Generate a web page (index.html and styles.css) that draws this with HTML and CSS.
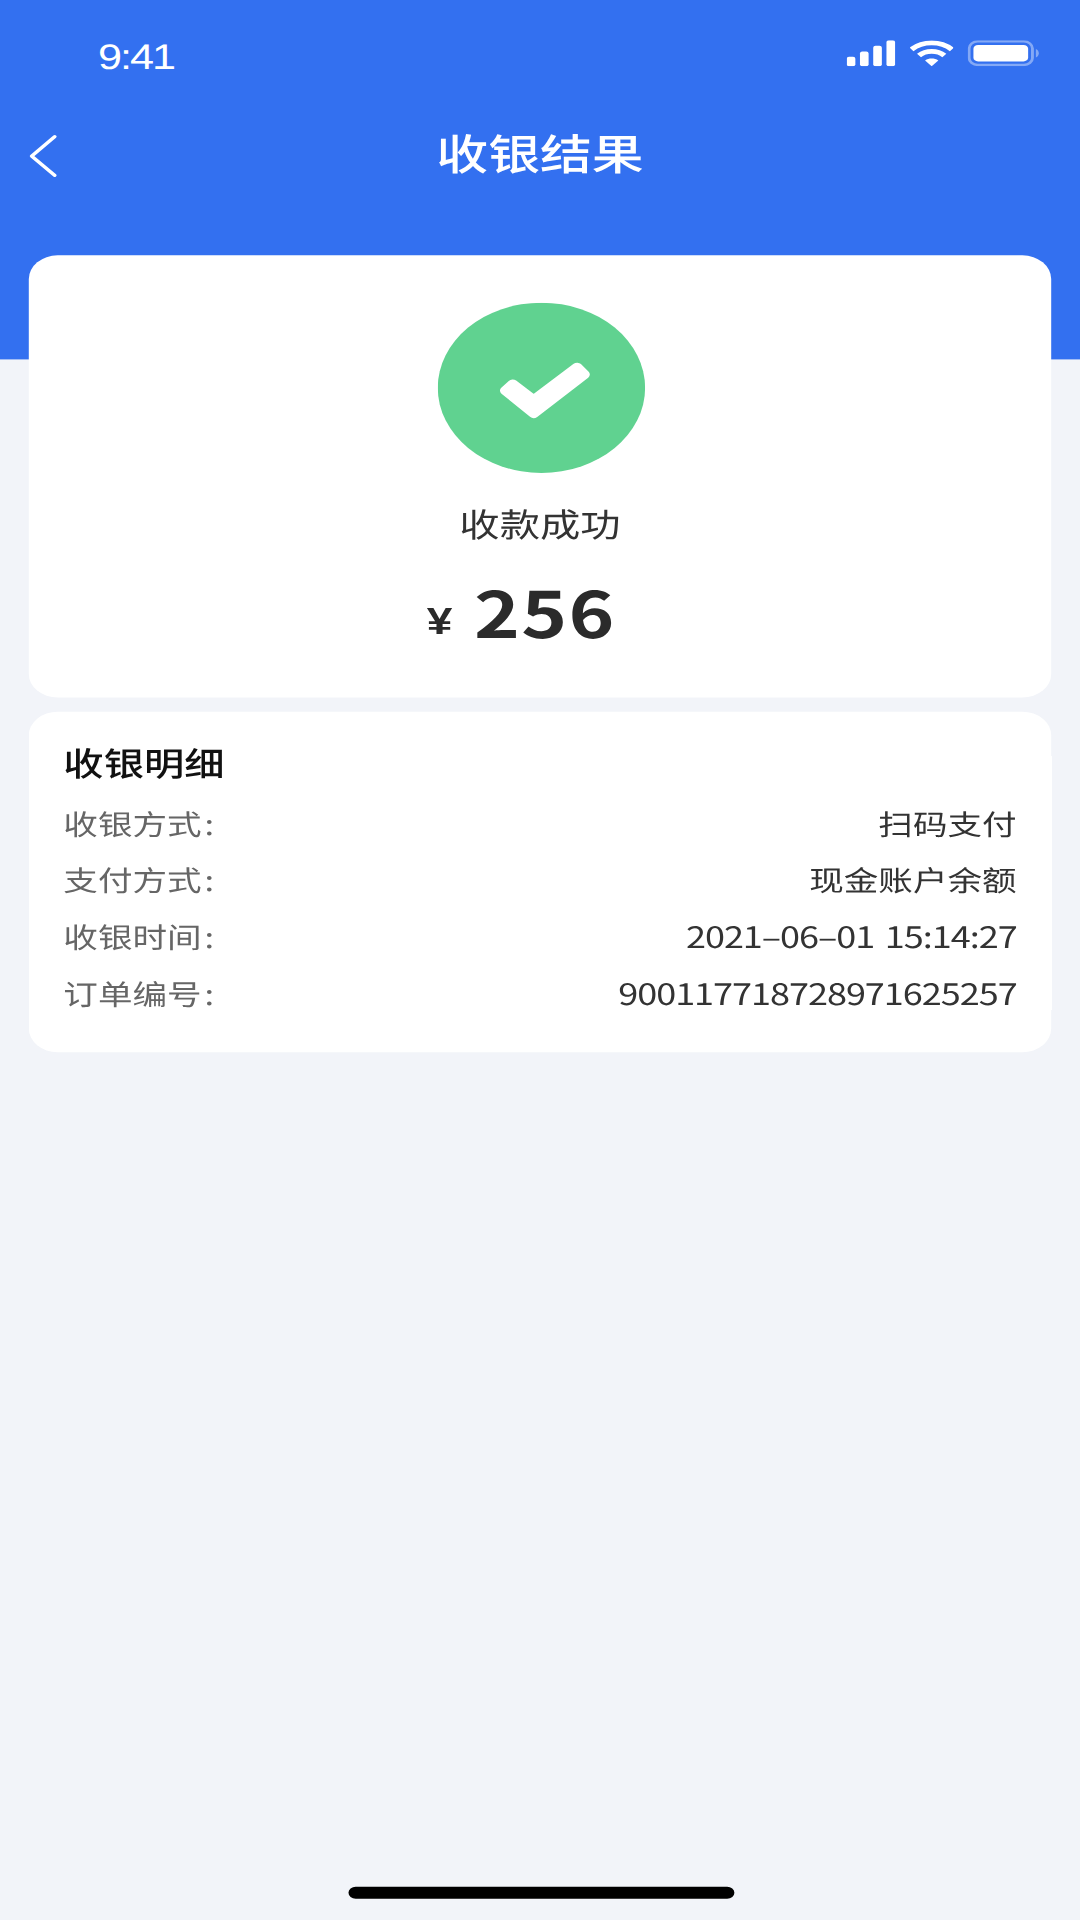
FILE: index.html
```html
<!DOCTYPE html>
<html lang="zh-CN">
<head>
<meta charset="utf-8">
<title>收银结果</title>
<link rel="stylesheet" href="styles.css">
</head>
<body>
<div class="screen">
  <header class="header">
    <div class="status">
      <span class="time">9:41</span>
      <div class="status-icons">
        <svg class="ic-signal" viewBox="0 0 17 11"><rect x="0" y="7" width="3" height="4" rx=".8"/><rect x="4.6" y="4.8" width="3" height="6.2" rx=".8"/><rect x="9.2" y="2.4" width="3" height="8.6" rx=".8"/><rect x="13.8" y="0" width="3" height="11" rx=".8"/></svg>
        <svg class="ic-wifi" viewBox="0 0 15 11"><path class="arc" d="M.5 3.9C4.4.2 10.6.2 14.5 3.9"/><path class="arc" d="M3.1 6.5C5.5 4.2 9.5 4.2 11.9 6.5"/><path d="M7.5 11 5.2 8.6C6.5 7.5 8.5 7.5 9.8 8.6Z"/></svg>
        <svg class="ic-battery" viewBox="0 0 24.7 11"><rect class="shell" x=".5" y=".5" width="22" height="10" rx="3"/><rect x="2" y="2" width="19" height="7" rx="1.6"/><path class="nub" d="M23.7 3.7c.7.3 1 1 1 1.8s-.3 1.5-1 1.8Z"/></svg>
      </div>
    </div>
    <div class="nav">
      <svg class="back" viewBox="0 0 10 18"><path d="M9 .8 1 9l8 8.2"/></svg>
      <h1 class="nav-title">收银结果</h1>
    </div>
  </header>
  <main class="content">
    <section class="card result">
      <svg class="check" viewBox="0 0 72 72"><circle cx="36" cy="36" r="36"/><path d="M26 34.3 33.3 41 48.4 27.2 51 30.4 33.3 47 23.4 37.2Z"/></svg>
      <p class="result-label">收款成功</p>
      <p class="amount"><span class="yen">¥</span><span class="sum">256</span></p>
    </section>
    <section class="card detail">
      <h2 class="detail-title">收银明细</h2>
      <div class="row"><span class="key">收银方式<span class="colon">:</span></span><span class="val">扫码支付</span></div>
      <div class="row"><span class="key">支付方式<span class="colon">:</span></span><span class="val">现金账户余额</span></div>
      <div class="row"><span class="key">收银时间<span class="colon">:</span></span><span class="val num">2021–06–01 15:14:27</span></div>
      <div class="row"><span class="key">订单编号<span class="colon">:</span></span><span class="val num">900117718728971625257</span></div>
    </section>
  </main>
  <div class="home-bar"></div>
</div>
</body>
</html>
```
FILE: styles.css
```css
html, body { margin: 0; padding: 0; width: 1080px; height: 1920px; overflow: hidden; background: #f2f4f9; }
* { box-sizing: border-box; }
.screen {
  width: 375px; height: 812px; display: flex; flex-direction: column;
  transform-origin: 0 0; transform: scale(2.88, 2.3645);
  font-family: "Liberation Sans", "Noto Sans CJK SC", sans-serif; color: #333;
  text-rendering: geometricPrecision;
}
.header { height: 152px; background: #3370f0; color: #fff; flex: none; }
.status { height: 44px; display: flex; align-items: center; justify-content: space-between; padding: 1.5px 14.4px 0 34px; }
.time { font-size: 15px; letter-spacing: -.7px; padding-top: 3.5px; }
.status-icons { display: flex; align-items: center; gap: 4.7px; }
.status-icons svg { fill: #fff; height: 11px; display: block; }
.ic-signal { width: 17px; margin-right: .9px; }
.ic-wifi { width: 15px; }
.ic-battery { width: 24.7px; }
.arc { fill: none; stroke: #fff; stroke-width: 2; }
.shell { fill: none; stroke: #fff; stroke-opacity: .4; }
.nub { opacity: .4; }
.nav { height: 44px; display: flex; align-items: center; justify-content: center; position: relative; padding-bottom: 2px; }
.back { position: absolute; left: 10px; top: 13px; width: 10px; height: 18px; fill: none; stroke: #fff; stroke-width: 1.3; stroke-linecap: round; stroke-linejoin: round; }
.nav-title { margin: 0; font-size: 18px; font-weight: 500; }
.content { margin-top: -44px; padding: 0 10px; display: flex; flex-direction: column; gap: 6px; }
.card { background: #fff; border-radius: 10px; }
.result { height: 187px; padding-top: 16px; display: flex; flex-direction: column; align-items: center; }
.check { width: 72px; height: 72px; display: block; fill: #60d290; flex: none; margin-top: 4px; }
.check path { fill: #fff; stroke: #fff; stroke-width: 3.6; stroke-linejoin: round; }
.result-label { margin: 12px 0 0; font-size: 14px; line-height: 20px; }
.amount { margin: 8.5px 13px 0 0; display: flex; align-items: baseline; gap: 7.5px; line-height: 36px; color: #2b2b2b; }
.yen { font-size: 16px; font-weight: 700; position: relative; top: -1.5px; }
.sum { font-family: "Noto Sans CJK SC", sans-serif; font-size: 27px; font-weight: 700; letter-spacing: .5px; }
.detail { height: 144px; padding: 11.5px 12px 0 12px; }
.detail-title { margin: 0; font-size: 14px; line-height: 20px; font-weight: 500; color: #111; }
.row { display: flex; justify-content: space-between; align-items: center; height: 24px; line-height: 24px; font-size: 12px; font-family: "Noto Sans CJK SC", sans-serif; }
.detail-title + .row { margin-top: 4px; }
.key { color: #666; }
.colon { margin-left: 1px; }
.val { color: #333; }
.num { font-size: 12.5px; letter-spacing: -.35px; word-spacing: 1.2px; margin-bottom: 2px; }
.home-bar { width: 134px; height: 5px; border-radius: 3px; background: #000; margin: auto auto 9px; }
```
